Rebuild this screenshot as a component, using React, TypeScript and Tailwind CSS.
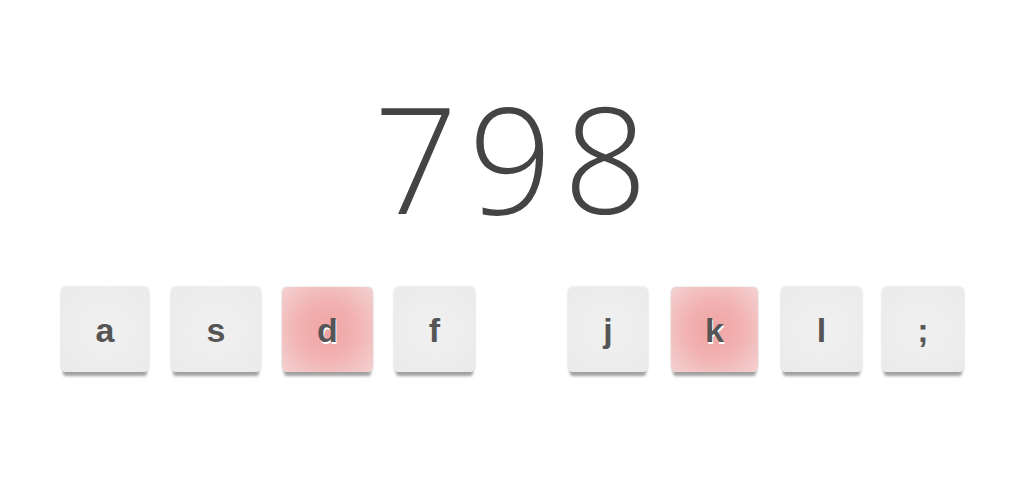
const keys = [
  { k: 'a', w: 'w-[88px]', hot: false, ml: 'ml-0' },
  { k: 's', w: 'w-[90px]', hot: false, ml: 'ml-[22px]' },
  { k: 'd', w: 'w-[91px]', hot: true, ml: 'ml-[21px]' },
  { k: 'f', w: 'w-[81px]', hot: false, ml: 'ml-[21px]' },
  { k: 'j', w: 'w-[80px]', hot: false, ml: 'ml-[93px]' },
  { k: 'k', w: 'w-[87px]', hot: true, ml: 'ml-[23px]' },
  { k: 'l', w: 'w-[81px]', hot: false, ml: 'ml-[23px]' },
  { k: ';', w: 'w-[82px]', hot: false, ml: 'ml-[20px]' },
];

function Key({ k, w, hot, ml }: { k: string; w: string; hot: boolean; ml: string }) {
  return (
    <div
      className={`${w} ${ml} h-[85px] rounded-[5px] flex items-center justify-center shadow-[0_6px_3px_-2px_#a0a0a0,0_0_2px_rgba(0,0,0,0.22)] ${
        hot
          ? 'bg-[radial-gradient(circle,#f0a3a3_0%,#f2b1b1_45%,#f3d2d2_100%)]'
          : 'bg-[radial-gradient(circle,#f0f0f0_0%,#ededee_60%,#eaeaeb_100%)]'
      }`}
    >
      <span
        className={`font-['Liberation_Sans',Arial,sans-serif] font-bold text-[34px] leading-none text-[#555555] ${
          hot ? '[text-shadow:1px_2px_0_#ffffff]' : ''
        }`}
      >
        {k}
      </span>
    </div>
  );
}

export default function App() {
  return (
    <div className="w-[1032px] h-[486px] bg-white flex flex-col">
      <div className="h-[287px] flex justify-center">
        <div className="mt-[84px] font-['Open_Sans',sans-serif] font-[350] text-[147px] leading-none text-[#444444] tracking-[11px]">
          798
        </div>
      </div>
      <div className="flex pl-[61px]">
        {keys.map(x => (
          <Key key={x.k} {...x} />
        ))}
      </div>
    </div>
  );
}
